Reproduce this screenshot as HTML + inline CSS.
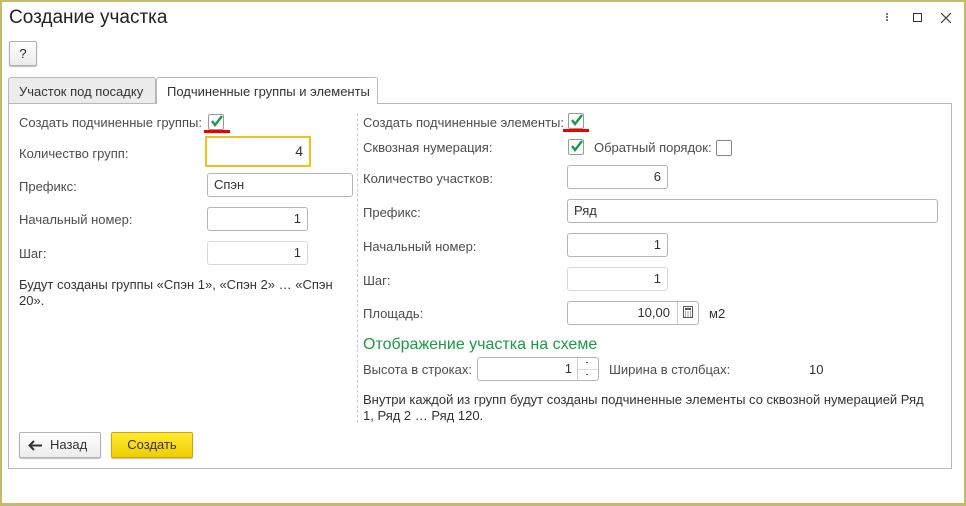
<!DOCTYPE html>
<html><head><meta charset="utf-8"><style>
*{box-sizing:border-box;margin:0;padding:0}
body{width:966px;height:506px;position:relative;background:#fff;font-family:"Liberation Sans",Arial,sans-serif;font-size:13px;color:#4d4d4d;overflow:hidden}
.frame{position:absolute;left:0;top:0;width:966px;height:506px;border:2px solid #c8b968;border-bottom-width:3px}
.a{position:absolute;white-space:nowrap}
.in{position:absolute;height:24px;border:1px solid #b5b5b5;border-radius:3px;background:#fff;color:#333;padding:0 6px;line-height:22px;font-size:13px}
.r{text-align:right}
.dis{border-color:#d8d8d8}
.cb{position:absolute;width:16px;height:16px;border:1px solid #9a9a9a;border-radius:2px;background:#fff}
.cb svg{position:absolute;left:0;top:-2px}
.red{position:absolute;height:3px;background:#e00}
</style></head><body>
<div class="frame"></div>
<div class="a" style="left:9px;top:7px;font-size:19px;color:#222">Создание участка</div>
<div class="a" style="left:886px;top:13px;width:2px;height:2px;background:#777;box-shadow:0 3px #777,0 6px #777"></div>
<div class="a" style="left:913px;top:13px;width:9px;height:9px;border:1.5px solid #333"></div>
<svg class="a" style="left:941px;top:13px" width="10" height="10" viewBox="0 0 10 10"><path d="M0 0L10 10M10 0L0 10" stroke="#444" stroke-width="1.2"/></svg>
<div class="a" style="left:9px;top:41px;width:28px;height:25px;border:1px solid #b0b0b0;border-radius:2px;background:linear-gradient(#fff,#ececec);box-shadow:0 1px 1px #bbb;text-align:center;line-height:23px;color:#222">?</div>
<div class="a" style="left:8px;top:77px;width:148px;height:27px;border:1px solid #b8b8b8;border-bottom:none;background:#ececec;border-radius:3px 3px 0 0;padding:6px 0 0 10px;color:#333">Участок под посадку</div>
<div class="a" style="left:156px;top:77px;width:222px;height:27px;border:1px solid #b8b8b8;border-bottom:none;background:#fff;border-radius:3px 3px 0 0;padding:6px 0 0 10px;color:#333;z-index:2">Подчиненные группы и элементы</div>
<div class="a" style="left:8px;top:103px;width:944px;height:366px;border:1px solid #b8b8b8"></div>
<div class="a" style="left:357px;top:113px;height:310px;border-left:1px dashed #ccc"></div>
<div class="a" style="left:19px;top:115px">Создать подчиненные группы:</div>
<div class="cb" style="left:208px;top:114px"><svg width="16" height="16" viewBox="0 0 16 16"><path d="M3 8l3 4 7-9" stroke="#1a9b4a" stroke-width="2.4" fill="none"/></svg></div>
<div class="red" style="left:204px;top:130px;width:26px"></div>
<div class="a" style="left:19px;top:146px">Количество групп:</div>
<div class="in r" style="left:205px;top:136px;width:106px;height:31px;border:2px solid #f2c21c;border-radius:0;line-height:27px;font-size:14px">4</div>
<div class="a" style="left:19px;top:179px">Префикс:</div>
<div class="in" style="left:207px;top:173px;width:146px">Спэн</div>
<div class="a" style="left:19px;top:212px">Начальный номер:</div>
<div class="in r" style="left:207px;top:207px;width:101px">1</div>
<div class="a" style="left:19px;top:246px">Шаг:</div>
<div class="in r dis" style="left:207px;top:241px;width:101px">1</div>
<div class="a" style="left:19px;top:277px;line-height:16px;color:#333">Будут созданы группы «Спэн 1», «Спэн 2» … «Спэн<br>20».</div>
<div class="a" style="left:363px;top:115px">Создать подчиненные элементы:</div>
<div class="cb" style="left:568px;top:113px"><svg width="16" height="16" viewBox="0 0 16 16"><path d="M3 8l3 4 7-9" stroke="#1a9b4a" stroke-width="2.4" fill="none"/></svg></div>
<div class="red" style="left:563px;top:129px;width:26px"></div>
<div class="a" style="left:363px;top:140px">Сквозная нумерация:</div>
<div class="cb" style="left:568px;top:139px"><svg width="16" height="16" viewBox="0 0 16 16"><path d="M3 8l3 4 7-9" stroke="#1a9b4a" stroke-width="2.4" fill="none"/></svg></div>
<div class="a" style="left:594px;top:140px">Обратный порядок:</div>
<div class="cb" style="left:716px;top:140px;border-color:#888"></div>
<div class="a" style="left:363px;top:171px">Количество участков:</div>
<div class="in r" style="left:567px;top:165px;width:101px">6</div>
<div class="a" style="left:363px;top:205px">Префикс:</div>
<div class="in" style="left:567px;top:199px;width:371px">Ряд</div>
<div class="a" style="left:363px;top:239px">Начальный номер:</div>
<div class="in r" style="left:567px;top:233px;width:101px">1</div>
<div class="a" style="left:363px;top:273px">Шаг:</div>
<div class="in r dis" style="left:567px;top:267px;width:101px">1</div>
<div class="a" style="left:363px;top:306px">Площадь:</div>
<div class="in r" style="left:567px;top:301px;width:132px;padding-right:28px">10,00</div>
<div class="a" style="left:677px;top:302px;height:22px;border-left:1px solid #ccc;width:1px"></div>
<svg class="a" style="left:683px;top:306px" width="10" height="12" viewBox="0 0 10 12"><rect x="0.5" y="0.5" width="9" height="11" fill="none" stroke="#555"/><rect x="2" y="2" width="6" height="2" fill="#555"/><path d="M2 6h1M4.5 6h1M7 6h1M2 8h1M4.5 8h1M7 8h1M2 10h1M4.5 10h1M7 10h1" stroke="#555"/></svg>
<div class="a" style="left:709px;top:306px;color:#333">м2</div>
<div class="a" style="left:363px;top:336px;font-size:16px;color:#1a9a46">Отображение участка на схеме</div>
<div class="a" style="left:363px;top:362px">Высота в строках:</div>
<div class="in r" style="left:477px;top:357px;width:122px;padding-right:26px">1</div>
<div class="a" style="left:577px;top:358px;height:22px;border-left:1px solid #ccc;width:1px"></div>
<div class="a" style="left:578px;top:369px;width:20px;border-top:1px solid #ddd"></div>
<div class="a" style="left:586px;top:362px;width:2px;height:1px;background:#555"></div>
<div class="a" style="left:586px;top:374px;width:2px;height:1px;background:#555"></div>
<div class="a" style="left:609px;top:362px">Ширина в столбцах:</div>
<div class="a" style="left:809px;top:362px;color:#333">10</div>
<div class="a" style="left:363px;top:392px;line-height:16px;color:#333">Внутри каждой из групп будут созданы подчиненные элементы со сквозной нумерацией Ряд<br>1, Ряд 2 … Ряд 120.</div>
<div class="a" style="left:19px;top:432px;width:82px;height:26px;border:1px solid #b5b5b5;border-radius:2px;background:linear-gradient(#fff,#ececec);box-shadow:0 1px 1px #bbb;line-height:24px;color:#333"><svg style="position:absolute;left:8px;top:7px" width="14" height="11" viewBox="0 0 14 11"><path d="M14 5.5H2M6 1L1.5 5.5 6 10" stroke="#333" stroke-width="2" fill="none"/></svg><span style="position:absolute;left:30px">Назад</span></div>
<div class="a" style="left:111px;top:432px;width:82px;height:26px;border:1px solid #c9a800;border-radius:2px;background:linear-gradient(#ffe930,#f0ce00);box-shadow:0 1px 1px #bbb;line-height:24px;text-align:center;color:#333">Создать</div>
</body></html>
